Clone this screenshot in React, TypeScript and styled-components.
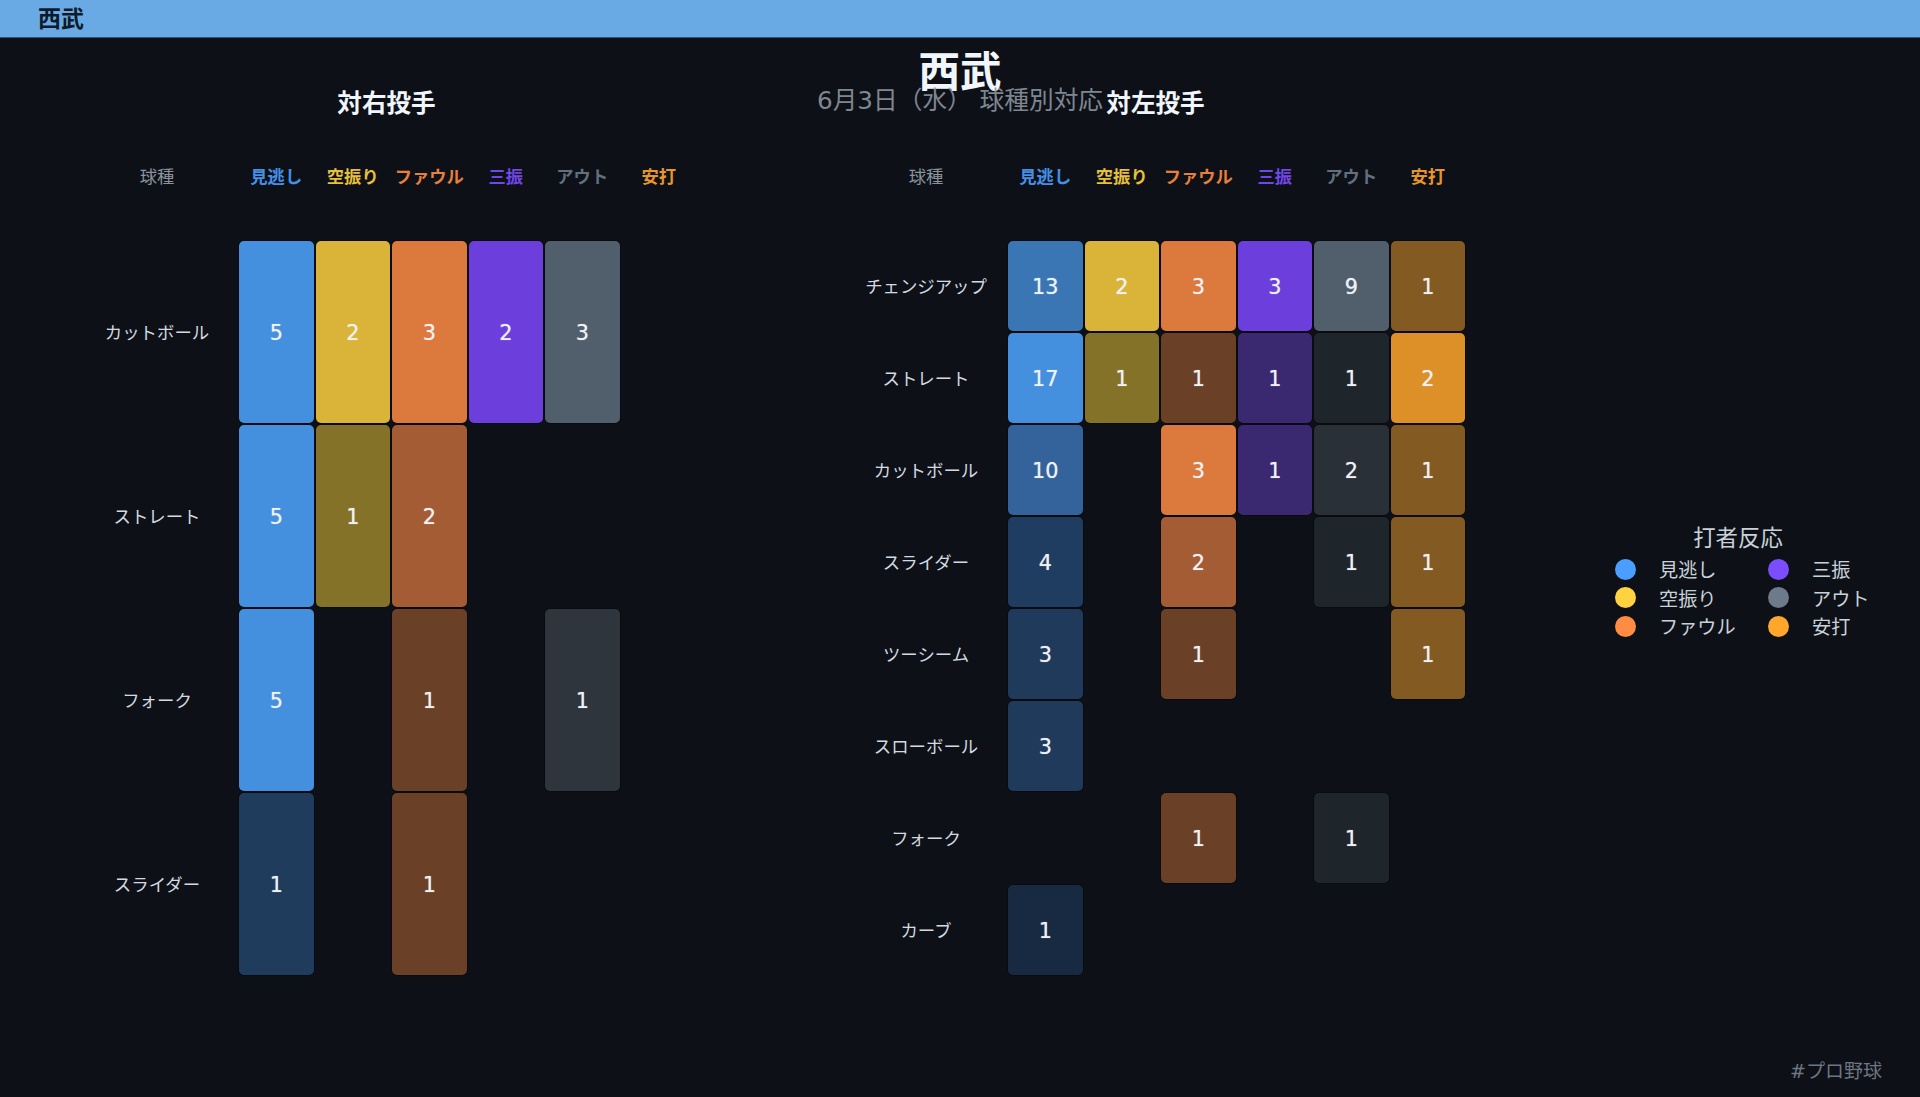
import React from "react";
import styled, { createGlobalStyle } from "styled-components";

const FONT = `"DejaVu Sans", "Noto Sans CJK JP", sans-serif`;

const Global = createGlobalStyle`
  html, body { margin: 0; padding: 0; background: #0d1117; }
  body { font-family: ${FONT}; }
`;

const Page = styled.div`
  position: relative;
  width: 1920px;
  height: 1097px;
  overflow: hidden;
  background: #0d1117;
  display: flex;
  flex-direction: column;
`;
const TopBar = styled.header`
  height: 34px;
  padding: 0 0 3px 38px;
  background: #6aaae4;
  border-bottom: 1px solid #2e5678;
  display: flex;
  align-items: center;
  font-size: 23px;
  font-weight: 700;
  color: #0d1b2a;
`;
const Heading = styled.div`
  position: absolute;
  top: 49px;
  left: 0;
  right: 0;
  text-align: center;
  pointer-events: none;
`;
const MainTitle = styled.div`
  font-size: 41.6px;
  line-height: 48px;
  font-weight: 700;
  color: #f0f6fc;
`;
const SubTitle = styled.div`
  font-size: 24.7px;
  line-height: 30px;
  margin-top: -11px;
  color: #8b949e;
  opacity: 0.9;
`;
const Stage = styled.main`
  display: flex;
  gap: 148px;
  padding: 51px 0 0 76px;
`;
const Panel = styled.section`
  width: 621px;
`;
const PanelTitle = styled.h2`
  margin: 0 0 27px;
  font-size: 24.6px;
  line-height: 30px;
  font-weight: 700;
  color: #f0f6fc;
  text-align: center;
`;
const ChartGrid = styled.div<{ $rows: number; $rowH: number }>`
  display: grid;
  grid-template-columns: 162px repeat(6, 76.5px);
  grid-template-rows: 94px repeat(${(p) => p.$rows}, ${(p) => p.$rowH}px);
  align-items: stretch;
`;
const ColHead = styled.div<{ $color: string; $bold?: boolean }>`
  display: flex;
  align-items: center;
  justify-content: center;
  margin-bottom: 36px;
  white-space: nowrap;
  font-size: 17.3px;
  font-weight: ${(p) => (p.$bold ? 700 : 400)};
  color: ${(p) => p.$color};
  opacity: ${(p) => (p.$bold ? 0.9 : 1)};
`;
const RowLabel = styled.div`
  display: flex;
  align-items: center;
  justify-content: center;
  padding-bottom: 2px;
  font-size: 17.4px;
  color: #d4dae0;
`;
const Cell = styled.div<{ $bg: string }>`
  margin: 1px;
  padding-top: 1px;
  border-radius: 5px;
  background: ${(p) => p.$bg};
  box-shadow: 0 0 0 1px rgba(0, 0, 0, 0.3);
  display: flex;
  align-items: center;
  justify-content: center;
  font-size: 20.8px;
  font-weight: 400;
  color: #eef2f6;
  text-shadow: 0 0 1px rgba(255, 255, 255, 0.6);
`;
const Legend = styled.aside`
  margin: 434px 0 0 1px;
  width: 246px;
`;
const LegendTitle = styled.div`
  font-size: 22.4px;
  line-height: 30px;
  color: #c9d1d9;
  text-align: center;
`;
const LegendGrid = styled.div`
  display: grid;
  grid-template-columns: 153px 1fr;
  grid-auto-flow: column;
  grid-template-rows: repeat(3, 28.5px);
  margin-top: 2px;
`;
const LegendItem = styled.div`
  display: flex;
  align-items: center;
  gap: 23px;
  font-size: 19.2px;
  color: #c9d1d9;
  white-space: nowrap;
`;
const Dot = styled.span<{ $color: string }>`
  width: 21px;
  height: 21px;
  border-radius: 50%;
  flex: none;
  background: ${(p) => p.$color};
`;
const Tag = styled.footer`
  position: absolute;
  right: 38px;
  bottom: 12px;
  font-size: 19px;
  line-height: 28px;
  color: #6e7681;
`;

type C = [number, string] | null;

const HEADS: [string, string][] = [
  ["見逃し", "#4a9eff"],
  ["空振り", "#ffd23f"],
  ["ファウル", "#ff8c42"],
  ["三振", "#7c4dff"],
  ["アウト", "#6c7a89"],
  ["安打", "#ffa62b"],
];

const left: [string, C[]][] = [
  ["カットボール", [[5, "#448fde"], [2, "#d9b438"], [3, "#dc793c"], [2, "#6c3fdc"], [3, "#515e6b"], null]],
  ["ストレート", [[5, "#448fde"], [1, "#857229"], [2, "#a35c33"], null, null, null]],
  ["フォーク", [[5, "#448fde"], null, [1, "#6a4026"], null, [1, "#2e353d"], null]],
  ["スライダー", [[1, "#1f3c5c"], null, [1, "#6a4026"], null, null, null]],
];

const right: [string, C[]][] = [
  ["チェンジアップ", [[13, "#3a76b4"], [2, "#d9b438"], [3, "#dc793c"], [3, "#6c3fdc"], [9, "#515e6b"], [1, "#835b22"]]],
  ["ストレート", [[17, "#448fde"], [1, "#857229"], [1, "#6a4026"], [1, "#3a2870"], [1, "#1e252b"], [2, "#dc9027"]]],
  ["カットボール", [[10, "#33639a"], null, [3, "#dc793c"], [1, "#3a2870"], [2, "#2a3037"], [1, "#835b22"]]],
  ["スライダー", [[4, "#1f3d60"], null, [2, "#a35c33"], null, [1, "#1e252b"], [1, "#835b22"]]],
  ["ツーシーム", [[3, "#1f3a5a"], null, [1, "#6a4026"], null, null, [1, "#835b22"]]],
  ["スローボール", [[3, "#1f3a5a"], null, null, null, null, null]],
  ["フォーク", [null, null, [1, "#6a4026"], null, [1, "#1e252b"], null]],
  ["カーブ", [[1, "#182a42"], null, null, null, null, null]],
];

function Chart({ title, rows, rowH }: { title: string; rows: [string, C[]][]; rowH: number }) {
  return (
    <Panel>
      <PanelTitle>{title}</PanelTitle>
      <ChartGrid $rows={rows.length} $rowH={rowH}>
        <ColHead $color="#8b949e">球種</ColHead>
        {HEADS.map(([name, color]) => (
          <ColHead key={name} $color={color} $bold>
            {name}
          </ColHead>
        ))}
        {rows.map(([label, cells]) => (
          <React.Fragment key={label}>
            <RowLabel>{label}</RowLabel>
            {cells.map((c, i) => (c ? <Cell key={i} $bg={c[1]}>{c[0]}</Cell> : <div key={i} />))}
          </React.Fragment>
        ))}
      </ChartGrid>
    </Panel>
  );
}

export default function App() {
  return (
    <Page>
      <Global />
      <TopBar>西武</TopBar>
      <Stage>
        <Chart title="対右投手" rows={left} rowH={184} />
        <Chart title="対左投手" rows={right} rowH={92} />
        <Legend>
          <LegendTitle>打者反応</LegendTitle>
          <LegendGrid>
            {HEADS.map(([name, color]) => (
              <LegendItem key={name}>
                <Dot $color={color} />
                {name}
              </LegendItem>
            ))}
          </LegendGrid>
        </Legend>
      </Stage>
      <Heading>
        <MainTitle>西武</MainTitle>
        <SubTitle>6月3日（水） 球種別対応</SubTitle>
      </Heading>
      <Tag>#プロ野球</Tag>
    </Page>
  );
}
